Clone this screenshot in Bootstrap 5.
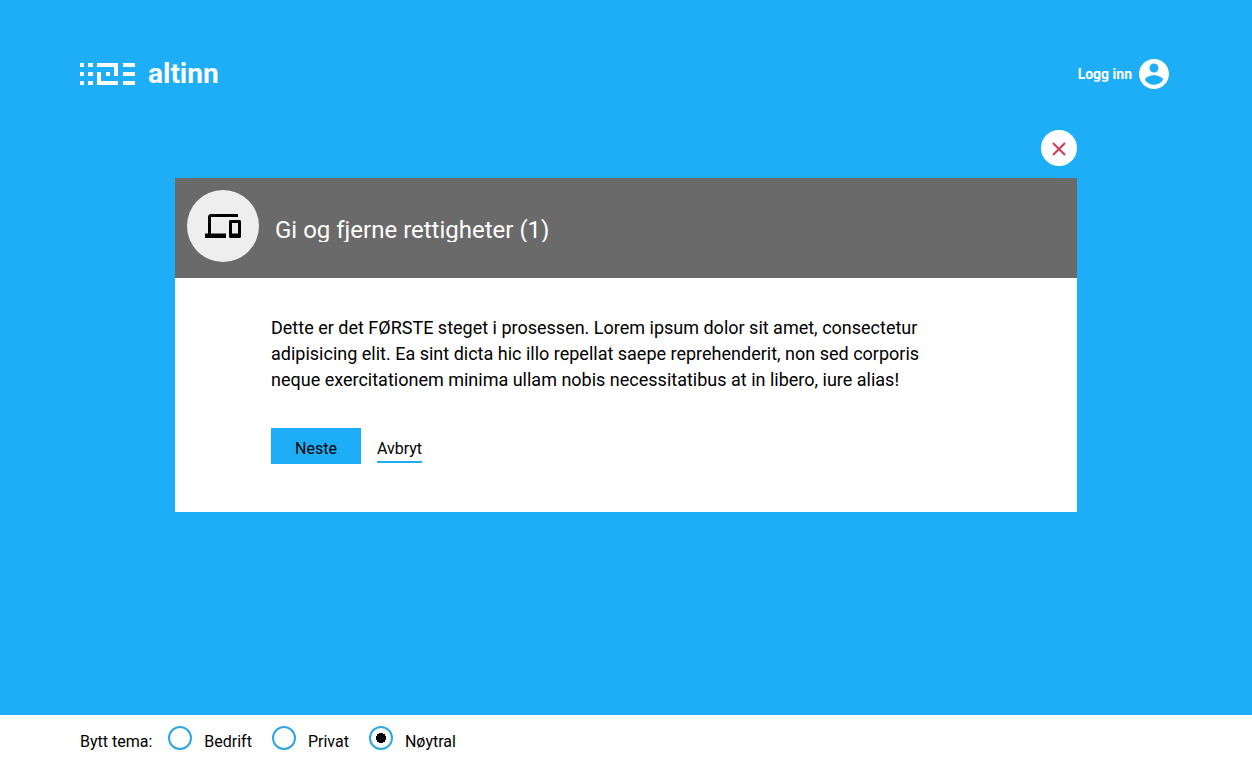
<!DOCTYPE html>
<html lang="nb">
<head>
<meta charset="utf-8">
<meta name="viewport" content="width=device-width, initial-scale=1">
<title>Altinn</title>
<link href="https://cdn.jsdelivr.net/npm/bootstrap@5.3.0/dist/css/bootstrap.min.css" rel="stylesheet">
<style>
  :root { --altinn-blue: #1eaef7; }
  body { background: var(--altinn-blue); color: #000; font: 16px/24px Roboto, "Liberation Sans", sans-serif; }
  .page-edge { padding-left: 80px; padding-right: 80px; }
  .site-header { padding-top: 56px; padding-bottom: 38px; }
  .wordmark { font: bold 28px/36px Roboto, sans-serif; margin-left: 12px; }
  .login { font: bold 14px/20px Roboto, sans-serif; }
  .dialog-wrap { max-width: 902px; }
  .dialog-card { margin-top: 12px; }
  .close-btn { width: 36px; height: 36px; background: #fff; }
  .close-btn:hover { background: #eee; }
  .dialog-head { background: #6a6a6a; height: 100px; padding: 12px; }
  .dialog-icon { width: 72px; height: 72px; background: #eee; }
  .dialog-title { font-size: 24px; line-height: 24px; margin-top: 28px; }
  .dialog-text { padding: 37px 96px 48px; }
  .intro { font-size: 18px; line-height: 26px; max-width: 680px; margin-bottom: 35px; }
  .btn-next { background: var(--altinn-blue); height: 36px; padding: 8px 24px 4px; line-height: 26px; }
  .btn-cancel { border-bottom: 2px solid var(--altinn-blue); line-height: 24px; margin-bottom: 1px; color: #000; }
  .theme-bar { height: 50px; padding-top: 11px; }
  .theme-option { margin-right: 20px; }
  .theme-radio { appearance: none; width: 24px; height: 24px; margin: 0 12px 0 0; border: 2px solid #2ea6e0; border-radius: 50%; background: #fff; }
  .theme-radio:checked { background: radial-gradient(circle, #000 5px, #fff 5px); }
  .theme-label { padding-top: 4px; }
</style>
</head>
<body class="d-flex flex-column min-vh-100">
<header class="site-header page-edge d-flex justify-content-between align-items-center">
  <a href="#" class="d-flex align-items-center text-white text-decoration-none">
    <svg width="56" height="22" viewBox="0 0 56 22" fill="currentColor" aria-hidden="true">
      <path d="M0 0h4v4H0zM0 9h4v4H0zM0 18h4v4H0zM8 0h5v4H8zM8 9h5v4H8zM8 18h5v4H8zM17 0h21v13h-4V4H17zM17 9h4v9h17v4H17zM26 9h4v4h-4zM43 0h12v4H43zM43 9h12v4H43zM43 18h12v4H43z"/>
    </svg>
    <span class="wordmark">altinn</span>
  </a>
  <a href="#" class="login d-flex align-items-center text-white text-decoration-none">
    <span>Logg inn</span>
    <svg class="ms-1" width="36" height="36" viewBox="0 0 24 24" fill="currentColor" aria-hidden="true">
      <path d="M12 2C6.480 2 2 6.480 2 12s4.480 10 10 10 10-4.480 10-10S17.520 2 12 2zm0 3c1.660 0 3 1.340 3 3s-1.340 3-3 3-3-1.340-3-3 1.340-3 3-3zm0 14.200c-2.500 0-4.710-1.280-6-3.220.030-1.990 4-3.080 6-3.080 1.990 0 5.970 1.090 6 3.080-1.290 1.940-3.500 3.220-6 3.220z"/>
    </svg>
  </a>
</header>
<main class="flex-grow-1">
  <div class="dialog-wrap w-100 mx-auto">
    <div class="d-flex justify-content-end">
      <button type="button" class="close-btn btn rounded-circle border-0 p-0 d-flex align-items-center justify-content-center" aria-label="Lukk">
        <svg width="16" height="16" viewBox="0 0 16 16" fill="none" stroke="#d23b53" stroke-width="2" aria-hidden="true"><path d="M2 3l12 12M14 3L2 15"/></svg>
      </button>
    </div>
    <section class="dialog-card bg-white">
      <div class="dialog-head d-flex gap-3 text-white">
        <div class="dialog-icon rounded-circle text-black d-flex align-items-center justify-content-center flex-shrink-0">
          <svg width="36" height="36" viewBox="0 0 24 24" fill="currentColor" aria-hidden="true">
            <path d="M4 6h18V4H4c-1.100 0-2 .900-2 2v11H0v3h14v-3H4V6zm19 2h-6c-.550 0-1 .450-1 1v10c0 .550.450 1 1 1h6c.550 0 1-.450 1-1V9c0-.550-.450-1-1-1zm-1 9h-4v-7h4v7z"/>
          </svg>
        </div>
        <h1 class="dialog-title fw-normal mb-auto overflow-hidden">Gi og fjerne rettigheter (1)</h1>
      </div>
      <div class="dialog-text">
        <p class="intro">Dette er det FØRSTE steget i prosessen. Lorem ipsum dolor sit amet, consectetur adipisicing elit. Ea sint dicta hic illo repellat saepe reprehenderit, non sed corporis neque exercitationem minima ullam nobis necessitatibus at in libero, iure alias!</p>
        <div class="d-flex align-items-end gap-3">
          <button type="button" class="btn-next border-0">Neste</button>
          <a href="#" class="btn-cancel text-decoration-none">Avbryt</a>
        </div>
      </div>
    </section>
  </div>
</main>
<footer class="theme-bar page-edge bg-white d-flex align-items-start">
  <span class="theme-label me-3">Bytt tema:</span>
  <div class="theme-option d-flex"><input class="theme-radio" type="radio" name="tema" id="bedrift"><label class="theme-label" for="bedrift">Bedrift</label></div>
  <div class="theme-option d-flex"><input class="theme-radio" type="radio" name="tema" id="privat"><label class="theme-label" for="privat">Privat</label></div>
  <div class="theme-option d-flex"><input class="theme-radio" type="radio" name="tema" id="noytral" checked><label class="theme-label" for="noytral">Nøytral</label></div>
</footer>
<script src="https://cdn.jsdelivr.net/npm/bootstrap@5.3.0/dist/js/bootstrap.bundle.min.js"></script>
</body>
</html>
